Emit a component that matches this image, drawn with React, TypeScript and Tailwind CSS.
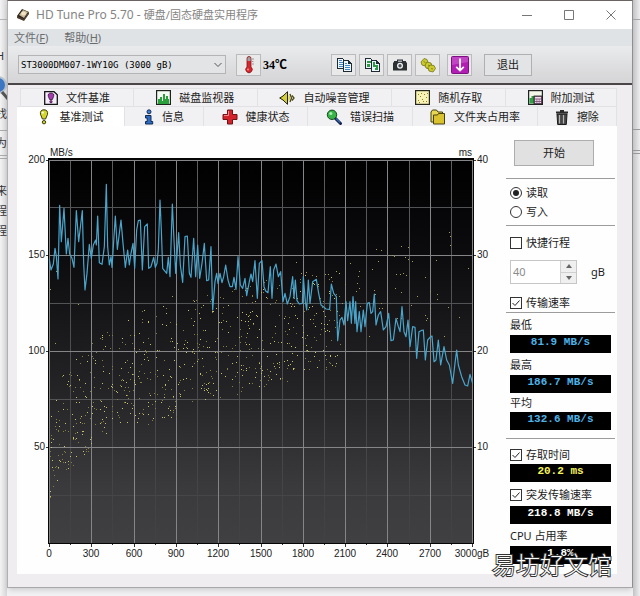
import { useState, type ReactNode } from 'react'

// Transfer rate samples, x/y in thirds of a chart pixel
const RATE = `148,388 153,420 160,402 165,355 169,378 174,447 179,226 184,335 192,235 199,372 204,325 209,372 216,385 222,412
229,242 236,335 247,242 251,400 255,480 261,430 268,343 274,385 280,345 287,330 289,345 293,258 298,398 306,403 313,350
319,163 323,350 328,405 333,380 336,412 346,258 352,358 363,270 369,340 376,412 383,360 388,405 393,370 399,340 404,415
410,300 415,272 421,270 427,420 434,290 442,282 446,415 453,410 461,382 466,412 471,400 475,358 480,210 484,300 488,415
500,430 505,382 510,440 517,222 522,330 527,430 536,308 541,405 548,457 555,320 562,318 568,430 573,442 581,325 587,440
593,345 599,445 606,400 613,340 620,452 626,450 633,350 638,540 645,455 650,430 654,460 660,430 666,458 671,440 677,405
684,450 690,470 697,470 702,442 708,478 714,380 721,465 728,475 735,445 740,497 748,455 753,432 758,455 765,392 772,505
778,400 786,392 792,470 797,483 804,488 811,410 816,505 821,420 828,402 835,440 842,425 849,515 855,490 862,522 870,500
878,440 882,505 886,450 891,512 898,522 907,520 910,440 916,515 920,540 925,450 930,520 938,455 949,448 956,490 963,525
970,530 978,537 989,538 994,462 1001,490 1009,500 1013,632 1020,570 1026,562 1032,585 1038,515 1043,572 1050,515
1054,580 1059,500 1065,580 1067,515 1071,605 1078,545 1083,605 1090,540 1095,590 1102,520 1108,518 1113,550 1118,545
1123,492 1128,585 1135,555 1142,545 1150,600 1158,590 1166,550 1173,632 1180,630 1188,565 1195,590 1200,605 1206,530
1212,605 1218,620 1224,570 1230,650 1238,590 1245,592 1250,685 1257,605 1263,602 1270,600 1276,690 1283,630 1290,622
1296,618 1302,695 1308,690 1315,630 1322,705 1332,650 1340,690 1348,705 1358,760 1365,700 1370,660 1375,705 1385,740
1395,765 1403,768 1410,733 1418,760`

// Access time samples beyond the dense band, same units
const SPARSE = `888,398 1050,400 1077,425 1075,440 1072,460 1078,475 1070,485 1116,417 1134,395 1128,358 1143,361 1178,375
1182,378 1203,348 1226,352 1217,383 1225,388 1236,395 1275,442 1310,390 1347,306 1352,318 1350,346 1404,415 1190,434
1201,433 1210,430 1219,436 1186,476 1204,487 1252,500 1291,485 1312,492 1312,508 1234,525 1277,555 1291,535 1346,532
1378,562 1333,618 1282,565 1123,480 1125,492 1144,520 1147,535 1138,535 1082,528 1028,520 1036,462 1010,423 985,432
976,432 919,428 904,430 948,440 1192,565 1204,565 1108,618 1280,572 235,523 165,639 516,500 150,477 168,425`

type Point = [number, number]

const parse = (raw: string): Point[] =>
  raw.split(/\s+/).map((pair) => {
    const [x, y] = pair.split(',').map(Number)
    return [x / 3 - 17, y / 3 + 4]
  })

// Chart box
const LEFT = 32
const RIGHT = 455
const TOP = 34
const BOTTOM = 417
const STEP_X = (RIGHT - LEFT) / 20
const STEP_Y = (BOTTOM - TOP) / 8

// Upper and lower edges of the access time band
const UPPER: Point[] = [[33, 292], [45, 248], [62, 230], [85, 208], [115, 186], [150, 176], [200, 164], [260, 152], [325, 146]]
const LOWER: Point[] = [[33, 375], [45, 348], [62, 336], [90, 310], [130, 300], [180, 284], [230, 266], [285, 252], [325, 238]]

function edge(line: Point[], x: number) {
  const i = Math.max(1, line.findIndex((p) => p[0] >= x))
  const [x0, y0] = line[i - 1]
  const [x1, y1] = line[i]
  return y0 + ((y1 - y0) * (x - x0)) / (x1 - x0)
}

function buildBand(count: number): Point[] {
  let seed = 570
  const rand = () => {
    seed = (seed * 16807) % 2147483647
    return seed / 2147483647
  }
  const out: Point[] = []
  for (let i = 0; i < count; i++) {
    const x = 33 + Math.pow(rand(), 1.15) * 291
    const y0 = edge(UPPER, x)
    out.push([x, y0 + (edge(LOWER, x) - y0) * Math.pow(rand(), 0.9)])
  }
  return out
}

const rate = parse(RATE)
const bandDots = buildBand(720)
const sparseDots = parse(SPARSE)

const dots = (pts: Point[]) => pts.map(([x, y]) => `M${Math.floor(x)} ${Math.floor(y)}h1v1h-1z`).join('')

function Chart() {
  const cols = Array.from({ length: 21 }, (_, i) => i)
  const rows = Array.from({ length: 9 }, (_, i) => i)
  return (
    <svg viewBox="0 0 489 448" className="w-full font-['Liberation_Sans',Arial,sans-serif] text-[10px]" role="img" aria-label="MB/s">
      <defs>
        <linearGradient id="plot" x1="0" y1="0" x2="0" y2="1">
          <stop offset="0" stopColor="#000" />
          <stop offset="0.25" stopColor="#0c0b0e" />
          <stop offset="0.6" stopColor="#242326" />
          <stop offset="0.85" stopColor="#3a393b" />
          <stop offset="1" stopColor="#403f42" />
        </linearGradient>
        <linearGradient id="minor" gradientUnits="userSpaceOnUse" x1="0" y1={TOP} x2="0" y2={BOTTOM}>
          <stop offset="0" stopColor="#5d5d5f" />
          <stop offset="0.5" stopColor="#4d4d4f" />
          <stop offset="1" stopColor="#414043" />
        </linearGradient>
      </defs>
      <rect x={LEFT - 1} y={TOP - 2} width={RIGHT - LEFT + 3} height={BOTTOM - TOP + 3} fill="#050505" />
      <rect x={LEFT} y={TOP} width={RIGHT - LEFT} height={BOTTOM - TOP} fill="url(#plot)" />

      {/* Grid, minor lines first */}
      <g shapeRendering="crispEdges">
        {cols.filter((i) => i % 2 === 1).map((i) => (
          <rect key={i} x={Math.round(LEFT + i * STEP_X)} y={TOP} width="1" height={BOTTOM - TOP} fill="url(#minor)" />
        ))}
        {rows.filter((i) => i % 2 === 1).map((i) => (
          <rect key={i} x={LEFT} y={Math.floor(TOP + i * STEP_Y)} width={RIGHT - LEFT} height="1" fill={i > 5 ? '#464548' : '#525355'} />
        ))}
        {cols.filter((i) => i % 2 === 0).map((i) => (
          <rect key={i} x={Math.round(LEFT + i * STEP_X)} y={TOP} width="1" height={BOTTOM - TOP} fill="#858587" />
        ))}
        {rows.filter((i) => i % 2 === 0 && i < 8).map((i) => (
          <rect key={i} x={LEFT} y={Math.floor(TOP + i * STEP_Y)} width={RIGHT - LEFT} height="1" fill="#858587" />
        ))}
        {cols.map((i) => (
          <rect key={i} x={Math.round(LEFT + i * STEP_X)} y={BOTTOM + 1} width="1" height={i % 2 ? 1 : 3} fill="#333" />
        ))}
        {rows.filter((i) => i % 2 === 0 && i < 8).map((i) => (
          <g key={i} fill="#333">
            <rect x={LEFT - 3} y={Math.floor(TOP + i * STEP_Y)} width="2" height="1" />
            <rect x={RIGHT + 2} y={Math.floor(TOP + i * STEP_Y)} width="2" height="1" />
          </g>
        ))}
        <path d={dots(bandDots.slice(0, 370))} fill="#857f44" />
        <path d={dots(bandDots.slice(370))} fill="#c6bf6e" />
        <path d={dots(sparseDots)} fill="#a59e58" />
      </g>

      <polyline points={rate.map((p) => p.join(',')).join(' ')} fill="none" stroke="#4aa5cb" strokeWidth="1.200" strokeLinejoin="round" />

      <g fill="#222">
        <text x="33" y="30">MB/s</text>
        <text x="455" y="30" textAnchor="end">ms</text>
        {[200, 150, 100, 50].map((v, i) => (
          <text key={v} x="28" y={Math.floor(TOP + i * 2 * STEP_Y) + 3} textAnchor="end">{v}</text>
        ))}
        {[40, 30, 20, 10].map((v, i) => (
          <text key={v} x="460" y={Math.floor(TOP + i * 2 * STEP_Y) + 3}>{v}</text>
        ))}
        {[0, 300, 600, 900, 1200, 1500, 1800, 2100, 2400, 2700].map((v, i) => (
          <text key={v} x={Math.round(LEFT + i * 2 * STEP_X)} y="431" textAnchor="middle">{v}</text>
        ))}
        <text x="455" y="431" textAnchor="middle">3000gB</text>
      </g>
    </svg>
  )
}

function DriveIcon() {
  return (
    <svg className="h-3.5 w-3.5" viewBox="0 0 14 14">
      <path d="M1 8 6 1l7 3-5 8-6-2z" fill="#28211c" />
      <path d="M3 7 7 2l5 2-4 6z" fill="#c9b894" />
      <ellipse cx="7.5" cy="5.5" rx="2.4" ry="2" fill="#efe2c6" />
      <path d="M1 8l7 3 5-7v2l-5 7-7-3z" fill="#4d3b2c" />
    </svg>
  )
}

function ThermometerIcon() {
  return (
    <svg className="h-[18px] w-3.5" viewBox="0 0 14 18">
      <path d="M5 2.500a2 2 0 0 1 4 0V11a3.200 3.200 0 1 1-4 0z" fill="#d8262c" stroke="#7c1c20" strokeWidth=".8" />
      <path d="M5.500 2.500a1.500 1.500 0 0 1 3 0V5h-3z" fill="#9fa3a6" />
      <path d="M10 3h2M10 5.500h1.500M10 8h2" stroke="#999" />
      <circle cx="6" cy="13.500" r=".9" fill="#ff9a98" />
    </svg>
  )
}

function CopyIcon({ image = false }: { image?: boolean }) {
  const ink = image ? '#2f9a43' : '#3f86c6'
  return (
    <svg className="h-4 w-4" viewBox="0 0 16 16" shapeRendering="crispEdges">
      <path d="M1 1h6v1h1v10H1z" fill="#1f2a33" />
      <path d="M2 2h5v9H2z" fill="#eef6fd" />
      <path d={image ? 'M3 4h4v2H3zM3 7h3v3H3z' : 'M3 3h3v1H3zM3 5h4v1H3zM3 7h4v1H3zM3 9h4v1H3z'} fill={ink} />
      <path d="M7 3h6v1h1v1h1v1h1v9H7z" fill="#1f2a33" />
      <path d="M8 4h4v3h3v7H8z" fill="#eef6fd" />
      <path d={image ? 'M9 5h2v3h1v2H9zM12 8h2v5h-3v-2h1z' : 'M9 6h2v1H9zM9 8h5v1H9zM9 10h5v1H9zM9 12h5v1H9z'} fill={ink} />
    </svg>
  )
}

function CameraIcon() {
  return (
    <svg className="h-4 w-4" viewBox="0 0 16 16">
      <path d="M5 4V2.500h6V4h3v1l1 1v7.500H1V6l1-1V4z" fill="#2b3033" />
      <path d="M6 3.500h4V5H6z" fill="#aab" />
      <circle cx="8" cy="8.800" r="3" fill="#f2f2f2" />
      <circle cx="8" cy="8.800" r="1.700" fill="#4a5258" />
    </svg>
  )
}

function DisksIcon() {
  return (
    <svg className="h-4 w-4" viewBox="0 0 16 16" fill="#cccb2c" stroke="#74731a" strokeWidth=".8">
      <path d="M1 5 4 1.500l3 1 1 3-3 3.500-3-1z" />
      <path d="M5 8l2-3 4 1 1 3-3 3-3-1z" />
      <path d="M8 10.500 10 8l4 .5 1.500 3-2.500 3.500-4-1z" />
      <path d="M3.500 4.500l2 1M8 8l2 1M11 11.500l2 .5" fill="none" />
    </svg>
  )
}

function SaveIcon() {
  return (
    <svg className="h-[18px] w-[18px]" viewBox="0 0 18 18">
      <rect x=".5" y=".5" width="17" height="17" rx="1" fill="#b01eb4" stroke="#7b127f" />
      <path d="M1 1h16v5L1 9z" fill="#d169d4" opacity=".5" />
      <path d="M9 2.500v12M5.200 10.800 9 14.600l3.800-3.800" fill="none" stroke="#fff" strokeWidth="1.800" />
    </svg>
  )
}

function FileBenchIcon() {
  return (
    <svg className="h-3.5 w-3.5" viewBox="0 0 14 14">
      <path d="M.7.700H10l3.300 3v9.600H.7z" fill="#f4eef8" stroke="#151515" strokeWidth="1.300" />
      <path d="M7 2C4.500 2 3.800 3.500 4.400 5.500l1.200 3h2.800l1.200-3C10.200 3.500 9.500 2 7 2z" fill="#a63bb0" stroke="#33103a" strokeWidth=".8" />
      <circle cx="7" cy="10.700" r="1.200" fill="#a63bb0" stroke="#33103a" strokeWidth=".7" />
    </svg>
  )
}

function BenchIcon() {
  return (
    <svg className="h-4 w-3.5" viewBox="0 0 14 16">
      <path d="M7 .800C4 .800 3 2.800 3.500 5.300l1.900 4.700h3.200l1.900-4.700C11 2.800 10 .800 7 .800z" fill="#d3d72c" stroke="#3a3a12" />
      <circle cx="5.800" cy="3.600" r="1.200" fill="#fff" opacity=".8" />
      <circle cx="7" cy="13.200" r="1.700" fill="#d3d72c" stroke="#3a3a12" />
    </svg>
  )
}

function MonitorIcon() {
  return (
    <svg className="h-[15px] w-[15px]" viewBox="0 0 15 15">
      <rect x=".6" y=".6" width="13.800" height="13.800" fill="#f4fbf2" stroke="#1c241c" strokeWidth="1.200" />
      <path d="M2 14V9h2V7h2v4h1V4h2v5h1V6h2v3h1v5z" fill="#29a03c" />
    </svg>
  )
}

function SpeakerIcon() {
  return (
    <svg className="h-3.5 w-4" viewBox="0 0 16 14">
      <path d="M.700 7 4 5l4.500-4.300v12.600L4 9z" fill="#d4cf3b" stroke="#22220c" />
      <path d="M11 3l1.500 4L11 11M13 4.500 15 7l-2 2.500" fill="none" stroke="#4a4a18" strokeWidth="1.300" />
      <path d="M9.500 3.500c2 2 2 5 0 7z" fill="#d4cf3b" />
    </svg>
  )
}

function RandomIcon() {
  return (
    <svg className="h-[15px] w-[15px]" viewBox="0 0 15 15">
      <rect x=".6" y=".6" width="13.800" height="13.800" fill="#f7f3b6" stroke="#26261a" strokeWidth="1.200" />
      <path d="M3 10h1v1H3zM5 6h1v1H5zM4 12h1v1H4zM7 9h1v1H7zM9 4h1v1H9zM11 7h1v1h-1zM8 11h1v1H8zM11 11h1v1h-1zM6 3h1v1H6zM3 4h1v1H3zM12 3h1v1h-1z" fill="#9a7d1c" />
    </svg>
  )
}

function ExtraIcon() {
  return (
    <svg className="h-[15px] w-[15px]" viewBox="0 0 15 15">
      <rect x=".6" y=".6" width="13.800" height="13.800" fill="#f2f7ea" stroke="#222" strokeWidth="1.200" />
      <path d="M1.500 13.500V8h2V6H6v7.500z" fill="#2fa045" />
      <rect x="6" y="6" width="8" height="8" fill="#8a5f86" stroke="#222" strokeWidth=".8" />
      <path d="M7 7h6v1.500H7zM7 9.500h1.500V11H7zM9.300 9.500h1.500V11H9.300zM11.500 9.500H13V11h-1.500zM7 12h1.500v1H7zM9.300 12h1.500v1H9.300zM11.500 12H13v1h-1.500z" fill="#f1dfee" />
    </svg>
  )
}

function InfoIcon() {
  return (
    <svg className="h-4 w-2.5" viewBox="0 0 10 16">
      <circle cx="5" cy="2.800" r="2" fill="#3f7fd6" stroke="#132a52" />
      <path d="M1.500 6.500h5.500v6h1.700v2.500H1.500v-2.500h1.700V9H1.500z" fill="#2e6cc4" stroke="#132a52" />
    </svg>
  )
}

function HealthIcon() {
  return (
    <svg className="h-4 w-4" viewBox="0 0 16 16">
      <path d="M5.500 1h5v4.500H15v5h-4.500V15h-5v-4.500H1v-5h4.500z" fill="#d3232a" stroke="#6f1216" />
      <path d="M6.500 2v4.500H2" fill="none" stroke="#f08a8d" />
    </svg>
  )
}

function ScanIcon() {
  return (
    <svg className="h-4 w-4" viewBox="0 0 16 16">
      <path d="M9 9l5.500 5.500" stroke="#15254a" strokeWidth="3" strokeLinecap="round" />
      <path d="M10 9.500l4 4" stroke="#3767b5" strokeWidth="1.200" />
      <circle cx="6" cy="5.800" r="4.700" fill="#38b34a" stroke="#164a1e" />
      <circle cx="4.800" cy="4.500" r="1.600" fill="#a8edb0" />
    </svg>
  )
}

function FolderIcon() {
  return (
    <svg className="h-4 w-4" viewBox="0 0 16 16">
      <path d="M1 13V3l1.500-2h4L8 3h4.500v10z" fill="#e8d552" stroke="#45400e" />
      <path d="M3.500 15V6h4l1-1.500h6V15z" fill="#d9c12f" stroke="#45400e" />
    </svg>
  )
}

function TrashIcon() {
  return (
    <svg className="h-4 w-3.5" viewBox="0 0 14 16">
      <path d="M1 2.500h12v2H1zM5 1h4v1.500H5z" fill="#2b2b2b" />
      <path d="M2 5h10l-.7 10.500H2.700z" fill="#444" stroke="#1c1c1c" />
      <path d="M4.500 6v8.500M8.500 6v8.500" stroke="#b5b5b5" strokeWidth="1.200" />
    </svg>
  )
}

function ToolButton({ label, children }: { label: string; children: ReactNode }) {
  return (
    <button aria-label={label} className="flex h-[22px] w-[25px] items-center justify-center border border-[#b9bbbd] bg-[#e9e9ea]">
      {children}
    </button>
  )
}

function Tab({ icon, label, size, active = false }: { icon: ReactNode; label: string; size: string; active?: boolean }) {
  return (
    <button
      role="tab"
      aria-selected={active}
      className={`${size} flex min-w-0 items-center justify-center gap-2 whitespace-nowrap border-r border-[#e2e1e3] text-[11px] leading-4 text-[#1c1c1c] ${active ? 'bg-white' : 'bg-[#f1f0f2]'}`}
    >
      {icon}
      {label}
    </button>
  )
}

function Check({ label, checked, onChange }: { label: string; checked: boolean; onChange: () => void }) {
  return (
    <label className="mx-1 flex h-[18px] items-center gap-1">
      <span className="grid">
        <input
          type="checkbox"
          checked={checked}
          onChange={onChange}
          className="peer col-start-1 row-start-1 h-3 w-3 appearance-none border border-[#333] bg-white"
        />
        <svg className="pointer-events-none invisible col-start-1 row-start-1 h-3 w-3 peer-checked:visible" viewBox="0 0 12 12">
          <path d="M2.500 6 5 8.500l4.500-5" fill="none" stroke="#222" />
        </svg>
      </span>
      {label}
    </label>
  )
}

function Radio({ label, checked, onChange }: { label: string; checked: boolean; onChange: () => void }) {
  return (
    <label className="mx-1 flex h-[19px] items-center gap-1">
      <span className="grid place-items-center">
        <input
          type="radio"
          name="mode"
          checked={checked}
          onChange={onChange}
          className="peer col-start-1 row-start-1 h-3 w-3 appearance-none rounded-full border border-[#333] bg-white"
        />
        <span className="pointer-events-none invisible col-start-1 row-start-1 h-1.5 w-1.5 rounded-full bg-[#222] peer-checked:visible" />
      </span>
      {label}
    </label>
  )
}

function Readout({ value, color }: { value: string; color: string }) {
  return (
    <output className={`${color} mx-1 block h-[18px] bg-black text-center font-['Liberation_Mono',monospace] text-[11px] leading-[14px] font-bold`}>
      {value}
    </output>
  )
}

const Rule = () => <hr className="border-[#9c9c9c]" />

function SidePanel() {
  const [mode, setMode] = useState('read')
  const [shortStroke, setShortStroke] = useState(false)
  const [rateOn, setRateOn] = useState(true)
  const [accessOn, setAccessOn] = useState(true)
  const [burstOn, setBurstOn] = useState(true)

  return (
    <aside className="mr-0.5 flex w-[109px] shrink-0 flex-col pt-3.5 text-[11px] leading-4 text-[#1c1c1c]">
      <button className="mb-3 ml-2 h-[26px] w-20 border border-[#adadad] bg-[#e1e1e1]">开始</button>
      <Rule />
      <div className="my-1">
        <Radio label="读取" checked={mode === 'read'} onChange={() => setMode('read')} />
        <Radio label="写入" checked={mode === 'write'} onChange={() => setMode('write')} />
      </div>
      <Rule />
      <div className="mt-2">
        <Check label="快捷行程" checked={shortStroke} onChange={() => setShortStroke(!shortStroke)} />
      </div>
      <div className="mx-1 mt-2 mb-2.5 flex h-6 items-center">
        <div className="flex h-6 w-[67px] border border-[#c6c6c6]">
          <input aria-label="gB" disabled value="40" readOnly className="min-w-0 flex-1 bg-white pl-0.5 text-[11px] text-[#8b8b8b]" />
          <div className="flex w-4 flex-col bg-[#efeff0]">
            <button aria-label="+" className="flex flex-1 items-center justify-center border-b border-l border-[#d0d0d0]">
              <svg className="h-1 w-1.5" viewBox="0 0 6 4"><path d="M0 4 3 0l3 4z" fill="#666" /></svg>
            </button>
            <button aria-label="-" className="flex flex-1 items-center justify-center border-l border-[#d0d0d0]">
              <svg className="h-1 w-1.5" viewBox="0 0 6 4"><path d="M0 0h6L3 4z" fill="#666" /></svg>
            </button>
          </div>
        </div>
        <span className="ml-3.5">gB</span>
      </div>
      <Check label="传输速率" checked={rateOn} onChange={() => setRateOn(!rateOn)} />
      <Rule />
      <p className="mx-1 mt-0.5 h-5 leading-5">最低</p>
      <Readout value="81.9 MB/s" color="text-[#4db2e6]" />
      <p className="mx-1 mt-0.5 h-5 leading-5">最高</p>
      <Readout value="186.7 MB/s" color="text-[#4db2e6]" />
      <p className="mx-1 h-[19px] leading-[19px]">平均</p>
      <Readout value="132.6 MB/s" color="text-[#4db2e6]" />
      <div className="mt-2 mb-[7px]"><Rule /></div>
      <Check label="存取时间" checked={accessOn} onChange={() => setAccessOn(!accessOn)} />
      <Readout value="20.2 ms" color="text-[#f4f35c]" />
      <div className="mt-1 mb-0.5">
        <Check label="突发传输速率" checked={burstOn} onChange={() => setBurstOn(!burstOn)} />
      </div>
      <Readout value="218.8 MB/s" color="text-white" />
      <p className="mx-1 mt-0.5 h-5 leading-5">CPU 占用率</p>
      <Readout value="1.8%" color="text-white" />
    </aside>
  )
}

function LeftStrip() {
  return (
    <div className="w-[7px] shrink-0 overflow-hidden bg-gradient-to-r from-[#f4f4f5] to-[#d6d6d8] text-[11px] leading-4 whitespace-nowrap text-[#333]">
      <div className="h-5 border-b border-[#b5b5b5]" />
      <p className="mt-7 -ml-1">H</p>
      <svg className="mt-2 h-8 w-2" viewBox="0 0 8 32">
        <circle cx="-2" cy="13" r="8" fill="#3c77c4" stroke="#b7c3d1" strokeWidth="2" />
        <path d="M2 20l6 7" stroke="#555" strokeWidth="3" />
      </svg>
      <p className="mt-0.5 -ml-1">找</p>
      <div className="mt-2 h-px bg-[#aaa]" />
      <p className="mt-1 -ml-1">为</p>
      <div className="mt-1 h-1 border-y border-[#aaa]" />
      <p className="mt-6 -ml-1">来</p>
      <p className="mt-1 -ml-1">程序</p>
      <p className="mt-1 -ml-1">程序</p>
    </div>
  )
}

function RightStrip() {
  return (
    <div className="w-[7px] shrink-0 bg-gradient-to-r from-[#c3c3c6] to-[#eeeef0]">
      <div className="h-5 border-b border-[#a5a5a5]" />
      <div className="h-[110px] border-b border-[#999]" />
      <div className="mt-5 h-1 border-y border-[#999]" />
    </div>
  )
}

export default function App() {
  return (
    <div className="relative flex min-h-screen bg-[#f2f1f3] font-['Noto_Sans','Noto_Sans_CJK_SC',sans-serif]">
      <LeftStrip />
      <main className="mb-2 flex min-w-0 flex-1 flex-col border border-t-[#6b6462] border-r-[#8e8e90] border-b-[#a8a7a9] border-l-[#b0afb1] bg-[#efedf0] shadow-md">
        {/* Title bar */}
        <header className="flex h-7 items-center bg-white pl-2">
          <DriveIcon />
          <h1 className="ml-1.5 flex-1 text-[11px] leading-4 text-[#858585]">
            <span className="text-[12px]">HD Tune Pro 5.70 - </span>硬盘/固态硬盘实用程序
          </h1>
          <div className="mr-4 flex items-center gap-8 text-[#777]">
            <button aria-label="最小化">
              <svg className="h-2.5 w-2.5" viewBox="0 0 10 10"><path d="M0 5.500h10" stroke="currentColor" /></svg>
            </button>
            <button aria-label="最大化">
              <svg className="h-2.5 w-2.5" viewBox="0 0 10 10"><path d="M.5.500h9v9h-9z" fill="none" stroke="currentColor" /></svg>
            </button>
            <button aria-label="关闭">
              <svg className="h-2.5 w-2.5" viewBox="0 0 10 10"><path d="M.5.500l9 9m0-9-9 9" stroke="currentColor" /></svg>
            </button>
          </div>
        </header>

        <nav className="flex h-[17px] items-center gap-4 bg-[#dfe3e6] pl-1.5 text-[11px] leading-4 text-[#6a6c6e]">
          <button>文件(<u>F</u>)</button>
          <button>帮助(<u>H</u>)</button>
        </nav>

        {/* Toolbar */}
        <div className="flex h-[39px] items-center border-b-2 border-[#4a4648] bg-gradient-to-b from-[#e9ebec] to-[#d5d4d6] pl-2.5">
          <div className="grid w-[208px] items-center">
            <select
              aria-label="ST3000DM007"
              className="col-start-1 row-start-1 h-[19px] appearance-none border border-[#b4b4b6] bg-[#e3e4e5] pl-0.5 font-['DejaVu_Sans_Mono',monospace] text-[9px] leading-4 text-black"
            >
              <option>ST3000DM007-1WY10G (3000 gB)</option>
            </select>
            <svg className="pointer-events-none col-start-1 row-start-1 mr-1 h-2 w-2 justify-self-end" viewBox="0 0 8 8">
              <path d="M.5 2 4 5.500 7.500 2" fill="none" stroke="#555" />
            </svg>
          </div>
          <div className="mr-0.5 ml-2.5 flex h-[22px] w-[25px] items-center justify-center border border-[#b9bbbd] bg-[#e9e9ea]">
            <ThermometerIcon />
          </div>
          <span className="w-[68px] font-['Liberation_Serif','Noto_Sans_CJK_SC',serif] text-[12px] leading-4 font-bold text-black">34℃</span>
          <div className="flex gap-[3px]">
            <ToolButton label="复制文本"><CopyIcon /></ToolButton>
            <ToolButton label="复制图像"><CopyIcon image /></ToolButton>
            <ToolButton label="截图"><CameraIcon /></ToolButton>
            <ToolButton label="选项"><DisksIcon /></ToolButton>
          </div>
          <div className="ml-[7px] flex gap-3">
            <ToolButton label="保存"><SaveIcon /></ToolButton>
            <button className="h-[22px] w-12 border border-[#b0b0b2] bg-[#e3e4e5] text-[11px] leading-4 text-[#1c1c1c]">退出</button>
          </div>
        </div>

        {/* Two stacked tab rows */}
        <div role="tablist" className="mr-[15px] ml-[9px] pt-[3px]">
          <div className="ml-[3px] flex h-[18px] border-t border-l border-[#e2e1e3]">
            <Tab size="flex-[113]" icon={<FileBenchIcon />} label="文件基准" />
            <Tab size="flex-[124]" icon={<MonitorIcon />} label="磁盘监视器" />
            <Tab size="flex-[135]" icon={<SpeakerIcon />} label="自动噪音管理" />
            <Tab size="flex-[114]" icon={<RandomIcon />} label="随机存取" />
            <Tab size="flex-[111]" icon={<ExtraIcon />} label="附加测试" />
          </div>
          <div className="flex h-5 border-t border-[#e2e1e3]">
            <Tab size="flex-[108]" icon={<BenchIcon />} label="基准测试" active />
            <Tab size="flex-[79]" icon={<InfoIcon />} label="信息" />
            <Tab size="flex-[104]" icon={<HealthIcon />} label="健康状态" />
            <Tab size="flex-[105]" icon={<ScanIcon />} label="错误扫描" />
            <Tab size="flex-[125]" icon={<FolderIcon />} label="文件夹占用率" />
            <Tab size="flex-[79]" icon={<TrashIcon />} label="擦除" />
          </div>
        </div>

        <section className="mr-[15px] mb-3 ml-[9px] flex bg-[#fefefe]">
          <div className="min-w-0 flex-1"><Chart /></div>
          <SidePanel />
        </section>
      </main>
      <RightStrip />

      {/* Watermark over the lower right corner */}
      <div className="pointer-events-none absolute right-7 bottom-4 font-['Noto_Sans_CJK_SC',sans-serif] text-[24px] leading-8 font-light text-white [-webkit-text-stroke:2px_#333] [paint-order:stroke_fill]">
        易坊好文馆
      </div>
    </div>
  )
}
